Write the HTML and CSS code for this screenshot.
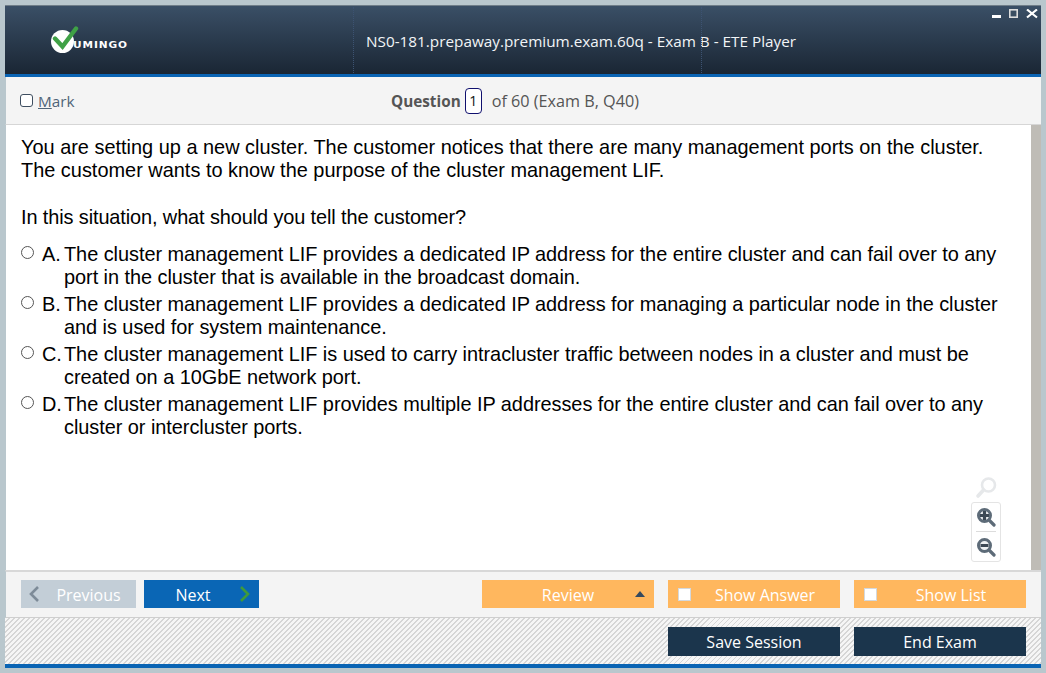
FILE: index.html
```html
<!DOCTYPE html>
<html lang="en">
<head>
    <meta charset="UTF-8">
    <meta name="viewport" content="width=device-width, initial-scale=1.0">
    <title>ETE Player</title>
    <link rel="stylesheet" href="styles.css">
</head>
<body>
    <div class="window">
        <header class="title-bar">
            <div class="logo">
                <svg class="logo-mark" width="28" height="28" viewBox="0 0 28 28">
                    <circle cx="11.5" cy="15.5" r="11.5" fill="#fff"/>
                    <path d="M4 12.5 L11.5 20.5 L25 2.5" fill="none" stroke="#3fa146" stroke-width="4.4" stroke-linecap="round" stroke-linejoin="miter"/>
                </svg>
                <span class="logo-text">UMINGO</span>
            </div>
            <div class="app-title">NS0-181.prepaway.premium.exam.60q - Exam B - ETE Player</div>
            <div class="window-controls">
                <svg width="50" height="10" viewBox="0 0 50 10">
                    <rect x="0" y="6" width="9" height="3" fill="#fff"/>
                    <rect x="17.8" y="0.8" width="7.4" height="7.4" fill="#3a4e62" stroke="#ddd" stroke-width="1.6"/>
                    <path d="M35 0.5 L45 8.5 M45 0.5 L35 8.5" stroke="#fff" stroke-width="2.2"/>
                </svg>
            </div>
        </header>

        <div class="question-bar">
            <label class="mark"><span class="mark-box"></span><span><u>M</u>ark</span></label>
            <div class="question-count">
                <b>Question</b><span class="question-num">1</span><span class="question-of">of 60 (Exam B, Q40)</span>
            </div>
        </div>

        <div class="content">
            <main class="question">
                <p>You are setting up a new cluster. The customer notices that there are many management ports on the cluster.<br>The customer wants to know the purpose of the cluster management LIF.</p>
                <p class="prompt">In this situation, what should you tell the customer?</p>
                <div class="option">
                    <span class="radio"></span><span class="letter">A.</span>
                    <span>The cluster management LIF provides a dedicated IP address for the entire cluster and can fail over to any port in the cluster that is available in the broadcast domain.</span>
                </div>
                <div class="option">
                    <span class="radio"></span><span class="letter">B.</span>
                    <span>The cluster management LIF provides a dedicated IP address for managing a particular node in the cluster and is used for system maintenance.</span>
                </div>
                <div class="option">
                    <span class="radio"></span><span class="letter">C.</span>
                    <span>The cluster management LIF is used to carry intracluster traffic between nodes in a cluster and must be created on a 10GbE network port.</span>
                </div>
                <div class="option">
                    <span class="radio"></span><span class="letter">D.</span>
                    <span>The cluster management LIF provides multiple IP addresses for the entire cluster and can fail over to any cluster or intercluster ports.</span>
                </div>

                <div class="zoom-tools">
                    <svg class="zoom-reset" width="24" height="24" viewBox="0 0 24 24">
                        <circle cx="14.5" cy="9" r="6.5" fill="none" stroke="#e6e8ea" stroke-width="2.6"/>
                        <path d="M9.5 14 L4 20" stroke="#e6e8ea" stroke-width="3.6" stroke-linecap="round"/>
                    </svg>
                    <div class="zoom-box">
                        <svg width="20" height="20" viewBox="0 0 20 20">
                            <circle cx="8.5" cy="8.5" r="6" fill="#eef0f2" stroke="#5d6b78" stroke-width="3"/>
                            <path d="M4 8.5 H13 M8.5 4 V13" stroke="#3c4854" stroke-width="3.2"/>
                            <path d="M13.5 13.5 L18 18" stroke="#5d6b78" stroke-width="3.2" stroke-linecap="round"/>
                        </svg>
                        <div class="zoom-sep"></div>
                        <svg width="20" height="20" viewBox="0 0 20 20">
                            <circle cx="8.5" cy="8.5" r="6" fill="#eef0f2" stroke="#5d6b78" stroke-width="3"/>
                            <path d="M4.5 8.5 H12.5" stroke="#3c4854" stroke-width="3"/>
                            <path d="M13.5 13.5 L18 18" stroke="#5d6b78" stroke-width="3.2" stroke-linecap="round"/>
                        </svg>
                    </div>
                </div>
            </main>
            <div class="scrollbar"></div>
        </div>

        <div class="nav-bar">
            <button class="btn btn-prev">
                <svg class="arrow" width="12" height="18" viewBox="0 0 12 18"><path d="M10 2 L3 9 L10 16" fill="none" stroke="#7d8b98" stroke-width="2.6"/></svg>
                Previous
            </button>
            <button class="btn btn-next">
                Next
                <svg class="arrow" width="12" height="18" viewBox="0 0 12 18"><path d="M2 2 L9 9 L2 16" fill="none" stroke="#3f9a3c" stroke-width="2.6"/></svg>
            </button>
            <button class="btn btn-orange btn-review">
                Review
                <span class="caret"></span>
            </button>
            <button class="btn btn-orange btn-check"><span class="check"></span>Show Answer</button>
            <button class="btn btn-orange btn-check"><span class="check"></span>Show List</button>
        </div>

        <div class="session-bar">
            <button class="btn btn-dark">Save Session</button>
            <button class="btn btn-dark">End Exam</button>
        </div>
    </div>
</body>
</html>
```

FILE: styles.css
```css
* {
    box-sizing: border-box;
}
html, body {
    height: 100%;
}
body {
    margin: 0;
    padding: 5px;
    background-color: #b9c7cd;
    font-family: "Open Sans", "Noto Sans", sans-serif;
}
.window {
    height: 663px;
    display: flex;
    flex-direction: column;
    background: #fff;
}
.title-bar {
    height: 72px;
    flex: none;
    display: flex;
    align-items: flex-start;
    background: linear-gradient(#3a4f66, #1a2634);
    border-top: 1px solid #6f7d88;
    border-bottom: 3px solid #0a64b4;
}
.logo {
    width: 361px;
    flex: none;
    display: flex;
    align-items: flex-end;
    padding: 20px 0 0 46px;
}
.logo-mark {
    display: block;
}
.logo-text {
    color: #fff;
    font-family: "DejaVu Sans", sans-serif;
    font-size: 8.8px;
    font-weight: bold;
    letter-spacing: 0.75px;
    margin-left: -6px;
    margin-bottom: 3px;
    line-height: 11px;
    transform: scaleX(1.2);
    transform-origin: left;
}
.app-title {
    position: relative;
    color: #f2f5f7;
    font-size: 15.3px;
    line-height: 73px;
    height: 68px;
    margin-top: -1px;
    white-space: nowrap;
}
.app-title::before,
.app-title::after {
    content: "";
    position: absolute;
    top: 2px;
    bottom: 0;
    border-left: 1px dotted #3d5372;
}
.app-title::before {
    left: -13px;
}
.app-title::after {
    left: 335px;
}
.window-controls {
    margin-left: auto;
    padding: 3px 0 0 0;
    margin-right: -1px;
    height: 20px;
}
.window-controls svg {
    display: block;
}
.question-bar {
    height: 48px;
    flex: none;
    display: flex;
    align-items: center;
    background: #f4f4f4;
    border-left: 1px solid #b9c7cd;
    border-bottom: 1px solid #d6d6d6;
    color: #555;
    font-size: 15.3px;
}
.mark {
    width: 385px;
    flex: none;
    display: flex;
    align-items: center;
    gap: 5px;
    padding-left: 14px;
    color: #4f6478;
}
.mark-box {
    width: 13px;
    height: 13px;
    border: 1px solid #3e4e60;
    border-radius: 3px;
    background: #fff;
}
.question-count {
    display: flex;
    align-items: center;
}
.question-num {
    width: 17px;
    height: 26px;
    margin: 0 10px 0 4px;
    border: 1px solid #10106e;
    border-radius: 4px;
    color: #111;
    font-size: 14px;
    line-height: 24px;
    text-align: center;
    background: #fff;
}
.question-of {
    font-size: 16.2px;
}
.content {
    flex: 1;
    min-height: 0;
    display: flex;
    border-left: 1px solid #b9c7cd;
}
.question {
    flex: 1;
    position: relative;
    padding: 11px 0 0 15px;
    color: #000;
    font-family: "Liberation Sans", Arial, sans-serif;
    font-size: 19.93px;
    line-height: 23px;
}
.question p {
    margin: 0 0 24px;
}
.question .prompt {
    margin-bottom: 14px;
    letter-spacing: -0.11px;
}
.option {
    display: flex;
    margin-bottom: 4px;
    padding-right: 25px;
    letter-spacing: -0.05px;
}
.radio {
    width: 13px;
    height: 13px;
    flex: none;
    margin: 3px 8px 0 0;
    border: 1px solid #555;
    border-radius: 50%;
    background: #fff;
}
.letter {
    width: 22px;
    flex: none;
}
.zoom-tools {
    position: absolute;
    right: 30px;
    top: 351px;
    display: flex;
    flex-direction: column;
    align-items: center;
    gap: 2px;
}
.zoom-reset {
    display: block;
}
.zoom-box {
    width: 30px;
    height: 60px;
    display: flex;
    flex-direction: column;
    align-items: center;
    padding: 4px 1px 0 0;
    border: 1px solid #e4e4e4;
    border-radius: 3px;
}
.zoom-box svg {
    display: block;
}
.zoom-sep {
    width: 20px;
    height: 1px;
    margin: 4px 0 5px;
    background: #dcdcdc;
}
.scrollbar {
    width: 10px;
    flex: none;
    background: #bfbcb6;
}
.nav-bar {
    height: 48px;
    flex: none;
    display: flex;
    align-items: flex-start;
    gap: 14px;
    padding: 8px 15px 0 15px;
    background: #f4f4f4;
    border-left: 1px solid #b9c7cd;
    border-top: 2px solid #d8d8d8;
    border-bottom: 1px solid #cfcfcf;
}
.btn {
    height: 28px;
    position: relative;
    display: flex;
    align-items: center;
    justify-content: center;
    width: 172px;
    padding: 0;
    border: none;
    color: #fff;
    font-family: "Open Sans", "Noto Sans", sans-serif;
    font-size: 16px;
}
.nav-bar .btn {
    padding-top: 2px;
}
.btn-prev {
    width: 115px;
    margin-right: -6px;
    background: #c3ced7;
    padding-left: 20px;
}
.btn-next {
    width: 115px;
    background: #0a66b5;
    padding-right: 17px;
}
.btn-review {
    margin-left: auto;
}
.arrow {
    position: absolute;
    top: 5px;
}
.btn-prev .arrow {
    left: 7px;
}
.btn-next .arrow {
    right: 8px;
}
.btn-orange {
    background: #ffb75e;
}
.btn-check {
    padding-left: 22px;
}
.caret {
    position: absolute;
    right: 9px;
    top: 11px;
    border-left: 5px solid transparent;
    border-right: 5px solid transparent;
    border-bottom: 6px solid #34495e;
}
.check {
    position: absolute;
    left: 10px;
    top: 8px;
    width: 13px;
    height: 13px;
    background: #fff;
    border: 1px solid #d4d8dc;
}
.session-bar {
    height: 50px;
    flex: none;
    display: flex;
    justify-content: flex-end;
    align-items: flex-start;
    gap: 14px;
    padding: 9px 15px 0 0;
    background-color: #f6f6f6;
    background-image: repeating-linear-gradient(135deg, #f6f6f6 0, #f6f6f6 2.2px, #d6d6d6 2.2px, #d6d6d6 3.54px);
    border-bottom: 4px solid #0a64b4;
}
.btn-dark {
    height: 29px;
    background: #1b354c;
}
```
